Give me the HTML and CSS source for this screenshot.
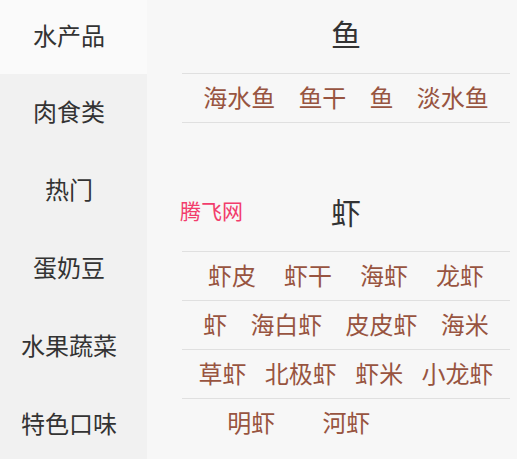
FILE: index.html
```html
<!DOCTYPE html>
<html lang="zh-CN">
<head>
<meta charset="utf-8">
<title>分类</title>
<link rel="stylesheet" href="styles.css">
</head>
<body>
<div class="app">
  <nav class="sidebar">
    <div class="side-item active">水产品</div>
    <div class="side-item">肉食类</div>
    <div class="side-item">热门</div>
    <div class="side-item">蛋奶豆</div>
    <div class="side-item">水果蔬菜</div>
    <div class="side-item">特色口味</div>
  </nav>
  <main class="content">
    <section class="group group-fish">
      <h2 class="group-title">鱼</h2>
      <div class="list list-closed">
        <div class="row"><span class="item">海水鱼</span><span class="item">鱼干</span><span class="item">鱼</span><span class="item">淡水鱼</span></div>
      </div>
    </section>
    <section class="group">
      <h2 class="group-title">虾</h2>
      <div class="list">
        <div class="row"><span class="item">虾皮</span><span class="item">虾干</span><span class="item">海虾</span><span class="item">龙虾</span></div>
        <div class="row"><span class="item">虾</span><span class="item">海白虾</span><span class="item">皮皮虾</span><span class="item">海米</span></div>
        <div class="row"><span class="item">草虾</span><span class="item">北极虾</span><span class="item">虾米</span><span class="item">小龙虾</span></div>
        <div class="row"><span class="item">明虾</span><span class="item">河虾</span><span class="item"></span><span class="item"></span></div>
      </div>
    </section>
    <div class="watermark">腾飞网</div>
  </main>
</div>
</body>
</html>
```
FILE: styles.css
```css
html, body {
  margin: 0;
  padding: 0;
}
* {
  box-sizing: border-box;
}
body {
  width: 517px;
  height: 459px;
  overflow: hidden;
  font-family: "Noto Sans CJK SC", "Noto Sans", sans-serif;
  background: #f6f6f6;
}
.app {
  display: flex;
  height: 459px;
}
.sidebar {
  width: 147px;
  flex: none;
  background: #f1f1f1;
  display: flex;
  flex-direction: column;
}
.side-item {
  height: 78px;
  flex: none;
  display: flex;
  align-items: center;
  justify-content: center;
  padding: 0 9px 5px 0;
  font-size: 24px;
  color: #333333;
}
.side-item.active {
  height: 74px;
  background: #fafafa;
}
.content {
  position: relative;
  flex: 1;
  padding: 0 7px 0 35px;
  background: #f7f7f7;
}
.group-fish {
  margin-bottom: 55px;
}
.group-title {
  margin: 0;
  height: 73px;
  padding-bottom: 7px;
  display: flex;
  align-items: center;
  justify-content: center;
  font-size: 30px;
  font-weight: normal;
  color: #333333;
}
.list-closed {
  border-bottom: 1px solid #e0e0e0;
}
.row {
  height: 49px;
  padding-bottom: 4px;
  border-top: 1px solid #e0e0e0;
  display: flex;
  align-items: center;
  justify-content: space-evenly;
}
.item {
  padding: 0 2px;
  font-size: 24px;
  color: #985440;
}
.watermark {
  position: absolute;
  left: 33px;
  top: 195px;
  font-size: 21px;
  color: #f23d6c;
}
```
